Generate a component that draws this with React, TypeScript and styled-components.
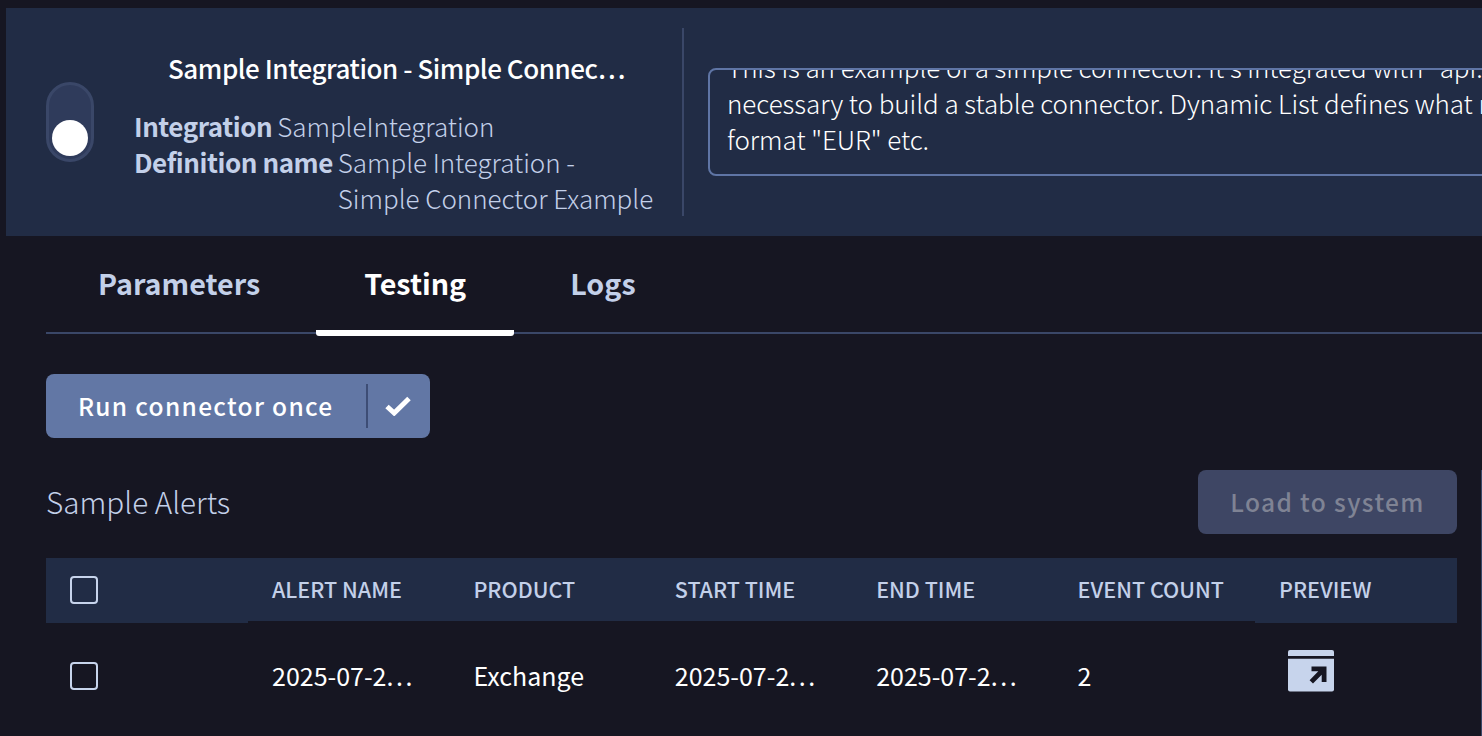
import styled, { createGlobalStyle } from "styled-components";

const GlobalStyle = createGlobalStyle`
  html, body {
    margin: 0;
    height: 100%;
    overflow: hidden;
    background: #161622;
  }
  body {
    font-family: "Noto Sans CJK SC", "Noto Sans", sans-serif;
    color: #fff;
  }
`;

const columns = ["ALERT NAME", "PRODUCT", "START TIME", "END TIME", "EVENT COUNT", "PREVIEW"];

const TruncatedDate = () => (
  <BodyCell>
    2025-07-2<Dots>...</Dots>
  </BodyCell>
);

const App = () => {
  return (
    <Page>
      <GlobalStyle />
      <Header>
        <Toggle>
          <ToggleKnob />
        </Toggle>
        <Info>
          <Title>Sample Integration - Simple Connec…</Title>
          <DetailRow>
            <DetailLabel>Integration</DetailLabel>
            <DetailValue>SampleIntegration</DetailValue>
          </DetailRow>
          <DetailRow>
            <DetailLabel>Definition name</DetailLabel>
            <DetailValue>Sample Integration - Simple Connector Example</DetailValue>
          </DetailRow>
        </Info>
        <Divider />
        <Description>
          <DescriptionText>
            <div>This is an example of a simple connector. It's integrated with "api.exchangerate.host" and includes all the</div>
            <div>necessary to build a stable connector. Dynamic List defines what must be fetched, in the following</div>
            <div>format "EUR" etc.</div>
          </DescriptionText>
        </Description>
      </Header>

      <Content>
        <Tabs>
          <Tab>Parameters</Tab>
          <Tab $active>Testing</Tab>
          <Tab>Logs</Tab>
        </Tabs>

        <RunButton>
          <RunLabel>Run connector once</RunLabel>
          <RunIcon>
            <svg width="26" height="20" viewBox="0 0 26 20" fill="none">
              <path d="M2 10.5l7.2 6.5L24 2.5" stroke="#fff" strokeWidth="5" />
            </svg>
          </RunIcon>
        </RunButton>

        <Results>
          <SectionRow>
            <SectionTitle>Sample Alerts</SectionTitle>
            <LoadButton>Load to system</LoadButton>
          </SectionRow>

          <HeadRow>
            <HeadCheckCell $tall>
              <Checkbox />
            </HeadCheckCell>
            {columns.map((column) => (
              <HeadCell key={column} $tall={column === "PREVIEW"}>
                <HeadLabel>{column}</HeadLabel>
              </HeadCell>
            ))}
          </HeadRow>
          <BodyRow>
            <CheckCell>
              <Checkbox />
            </CheckCell>
            <TruncatedDate />
            <BodyCell>Exchange</BodyCell>
            <TruncatedDate />
            <TruncatedDate />
            <BodyCell>2</BodyCell>
            <BodyCell>
              <PreviewIcon width="46" height="42" viewBox="0 0 46 42">
                <path d="M0 2a2 2 0 0 1 2-2h42a2 2 0 0 1 2 2v4H0z" fill="#c7d4ec" />
                <path
                  d="M0 8.7h46V39.5a2 2 0 0 1-2 2H2a2 2 0 0 1-2-2z"
                  fill="#c7d4ec"
                />
                <path d="M23.5 16.5H38.5V32h-4.8v-7.3L25 33.6 21.6 30.2l8.7-8.9h-6.8z" fill="#161622" />
              </PreviewIcon>
            </BodyCell>
          </BodyRow>
        </Results>
      </Content>
    </Page>
  );
};

const Page = styled.div`
  width: 1482px;
  height: 736px;
  overflow: hidden;
  padding: 8px 0 0 6px;
  box-sizing: border-box;
`;

const Header = styled.header`
  display: flex;
  align-items: center;
  width: 1700px;
  height: 228px;
  padding-left: 40px;
  box-sizing: border-box;
  background: #212c45;
`;

const Toggle = styled.div`
  display: flex;
  flex-direction: column;
  justify-content: flex-end;
  align-items: center;
  flex-shrink: 0;
  width: 48px;
  height: 80px;
  margin-right: 40px;
  padding-bottom: 3px;
  box-sizing: border-box;
  border-radius: 24px;
  background: #2f3b5b;
  border: 3px solid #3a4768;
`;

const ToggleKnob = styled.div`
  flex-shrink: 0;
  width: 36px;
  height: 36px;
  border-radius: 50%;
  background: #fff;
`;

const Info = styled.div`
  flex-shrink: 0;
  width: 519px;
  padding-top: 22px;
`;

const Title = styled.div`
  padding-left: 6px;
  font-size: 26px;
  line-height: 36px;
  font-weight: 500;
  letter-spacing: -0.45px;
  text-align: center;
  white-space: nowrap;
  margin-bottom: 22px;
`;

const DetailRow = styled.div`
  display: flex;
  gap: 5px;
  font-size: 26px;
  line-height: 36px;
  color: #c3d0e9;
`;

const DetailLabel = styled.span`
  font-weight: 700;
  letter-spacing: -0.45px;
  white-space: nowrap;
`;

const DetailValue = styled.span`
  flex: 0 0 318px;
  font-weight: 300;
  letter-spacing: -0.05px;
`;

const Divider = styled.div`
  flex-shrink: 0;
  width: 2px;
  height: 188px;
  margin: 0 24px 0 29px;
  background: #3a4768;
`;

const Description = styled.div`
  flex-shrink: 0;
  width: 1000px;
  height: 108px;
  padding: 0 17px;
  box-sizing: border-box;
  border: 2px solid #5f75a5;
  border-radius: 8px;
  overflow: hidden;
`;

const DescriptionText = styled.div`
  margin-top: -21px;
  font-size: 26px;
  line-height: 36px;
  font-weight: 300;
  letter-spacing: -0.05px;
  white-space: nowrap;
`;

const Content = styled.main`
  width: 1436px;
  margin-left: 40px;
`;

const Tabs = styled.nav`
  display: flex;
  gap: 8px;
  height: 98px;
  padding-left: 4px;
  box-sizing: border-box;
  border-bottom: 2px solid #3a4768;
`;

const Tab = styled.div<{ $active?: boolean }>`
  display: flex;
  align-items: center;
  flex-shrink: 0;
  height: 100px;
  padding: 0 48px 2px;
  box-sizing: border-box;
  font-size: 28.7px;
  font-weight: 700;
  color: ${(props) => (props.$active ? "#fff" : "#c3d0e9")};
  border-bottom: 6px solid ${(props) => (props.$active ? "#fff" : "transparent")};
  border-radius: 3px;
`;

const RunButton = styled.button`
  display: flex;
  align-items: center;
  width: 384px;
  height: 64px;
  margin-top: 40px;
  padding: 0;
  border: none;
  border-radius: 8px;
  background: #6277a5;
  color: #fff;
  font-family: inherit;
`;

const RunLabel = styled.span`
  padding: 0 32px 2px 32px;
  font-size: 24.5px;
  font-weight: 500;
  letter-spacing: 1.3px;
  white-space: nowrap;
`;

const RunIcon = styled.span`
  display: flex;
  align-items: center;
  height: 44px;
  padding-left: 17px;
  border-left: 2px solid #3d4d75;
`;

const Results = styled.section`
  margin-top: 32px;
  padding: 0 24px 20px 0;
  border-right: 1px solid #3a4768;
`;

const SectionRow = styled.div`
  display: flex;
  align-items: center;
  justify-content: space-between;
`;

const SectionTitle = styled.h2`
  margin: 0;
  padding-bottom: 2px;
  font-size: 29.7px;
  font-weight: 300;
  color: #c3d0e9;
`;

const LoadButton = styled.button`
  width: 259px;
  height: 64px;
  padding: 0 0 2px;
  border: none;
  border-radius: 8px;
  background: #3e4664;
  color: #7f8394;
  font-family: inherit;
  font-size: 24.5px;
  font-weight: 500;
  letter-spacing: 1.35px;
`;

const HeadRow = styled.div`
  display: grid;
  grid-template-columns: 202px repeat(5, 201.4px) 202px;
  align-items: start;
  height: 65px;
  margin-top: 24px;
`;

const BodyRow = styled.div`
  display: grid;
  grid-template-columns: 202px repeat(5, 201.4px) 202px;
  align-items: center;
  height: 106px;
`;

const HeadCell = styled.div<{ $tall?: boolean }>`
  display: flex;
  align-items: flex-start;
  height: ${(props) => (props.$tall ? "65px" : "63px")};
  padding-left: 24px;
  box-sizing: border-box;
  background: #212c45;
`;

const HeadCheckCell = styled(HeadCell)`
  padding-top: 18px;
`;

const HeadLabel = styled.span`
  font-size: 21.5px;
  line-height: 61px;
  font-weight: 500;
  color: #c3d0e9;
  white-space: nowrap;
`;

const CheckCell = styled.div`
  padding-left: 24px;
`;

const Checkbox = styled.span`
  display: block;
  width: 28px;
  height: 28px;
  box-sizing: border-box;
  border: 2px solid #c7d4ec;
  border-radius: 4px;
`;

const BodyCell = styled.div`
  padding: 0 0 2px 24px;
  font-size: 25px;
  font-weight: 400;
  white-space: nowrap;
`;

const Dots = styled.span`
  letter-spacing: 2.6px;
`;

const PreviewIcon = styled.svg`
  display: block;
  margin: 0 0 8px 8.6px;
`;

export default App;
